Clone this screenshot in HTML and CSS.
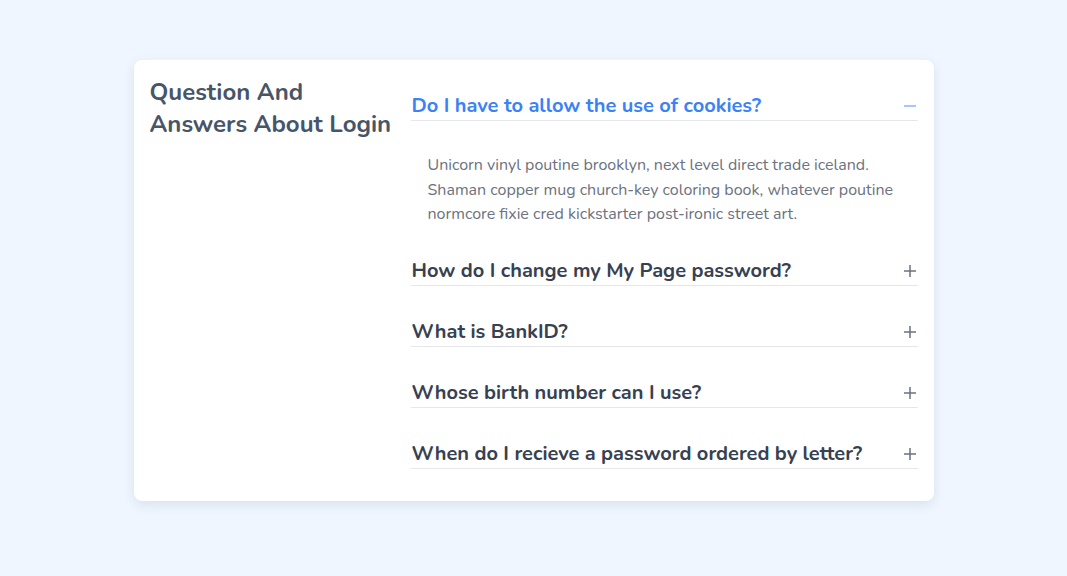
FILE: index.html
```html
<!DOCTYPE html>
<html>
<head>
<meta charset="utf-8">
<link rel="stylesheet" href="styles.css">
</head>
<body>
<div class="page">
  <section class="card">
    <h2 class="title">Question And Answers About Login</h2>
    <div class="faq">
      <div class="item open">
        <div class="q">
          <span>Do I have to allow the use of cookies?</span>
          <svg class="icon" width="12" height="12" viewBox="0 0 12 12"><path d="M0 6H12" stroke="currentColor" stroke-width="1.5"/></svg>
        </div>
        <p class="a">Unicorn vinyl poutine brooklyn, next level direct trade iceland. Shaman copper mug church-key coloring book, whatever poutine normcore fixie cred kickstarter post-ironic street art.</p>
      </div>
      <div class="item">
        <div class="q">
          <span>How do I change my My Page password?</span>
          <svg class="icon" width="12" height="12" viewBox="0 0 12 12"><path d="M0 6H12M6 0V12" stroke="currentColor" stroke-width="1.5"/></svg>
        </div>
      </div>
      <div class="item">
        <div class="q">
          <span>What is BankID?</span>
          <svg class="icon" width="12" height="12" viewBox="0 0 12 12"><path d="M0 6H12M6 0V12" stroke="currentColor" stroke-width="1.5"/></svg>
        </div>
      </div>
      <div class="item">
        <div class="q">
          <span>Whose birth number can I use?</span>
          <svg class="icon" width="12" height="12" viewBox="0 0 12 12"><path d="M0 6H12M6 0V12" stroke="currentColor" stroke-width="1.5"/></svg>
        </div>
      </div>
      <div class="item">
        <div class="q">
          <span>When do I recieve a password ordered by letter?</span>
          <svg class="icon" width="12" height="12" viewBox="0 0 12 12"><path d="M0 6H12M6 0V12" stroke="currentColor" stroke-width="1.5"/></svg>
        </div>
      </div>
    </div>
  </section>
</div>
</body>
</html>
```
FILE: styles.css
```css
html, body {
  margin: 0;
  padding: 0;
}
body {
  background: #eff6ff;
  font-family: "Nunito", "Lato", "Noto Sans", sans-serif;
  width: 1067px;
  height: 576px;
}
.page {
  padding-top: 60px;
  display: flex;
  justify-content: center;
}
.card {
  width: 800px;
  height: 441px;
  box-sizing: border-box;
  background: #fff;
  border-radius: 8px;
  box-shadow: 0 4px 12px rgba(30, 50, 90, 0.10);
  padding: 16px;
  display: grid;
  grid-template-columns: 245px 1fr;
  column-gap: 16px;
  align-items: start;
}
.title {
  margin: 0;
  font-size: 24px;
  line-height: 32px;
  font-weight: 700;
  color: #475569;
}
.faq {
  display: flex;
  flex-direction: column;
}
.item {
  margin-top: 32px;
}
.item:first-child {
  margin-top: 16px;
}
.open + .item {
  margin-top: 30px;
}
.q {
  display: flex;
  justify-content: space-between;
  align-items: center;
  font-size: 20px;
  line-height: 28px;
  font-weight: 700;
  color: #374151;
  border-bottom: 1px solid #e5e7eb;
  padding-left: 1px;
}
.q .icon {
  color: #6b7280;
  margin-right: 2px;
}
.open .q {
  color: #3b82f6;
}
.open .q .icon {
  color: #8ab4f8;
}
.a {
  margin: 0;
  padding: 32px 16px 0 17px;
  font-size: 16px;
  line-height: 24.5px;
  color: #6b7280;
}
```
